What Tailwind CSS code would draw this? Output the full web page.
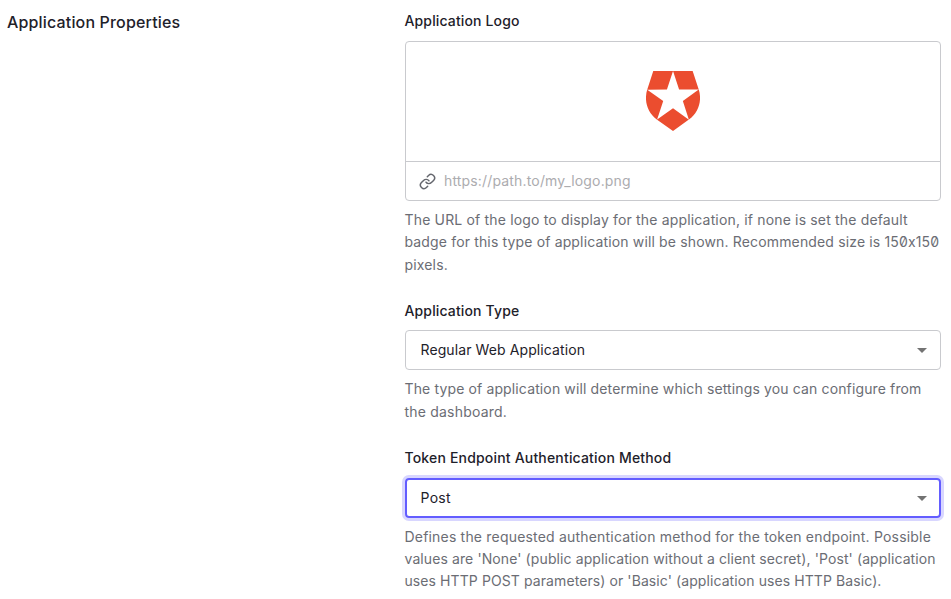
<!DOCTYPE html>
<html lang="en">
<head>
<meta charset="utf-8">
<title>Application Properties</title>
<script src="https://cdn.jsdelivr.net/npm/@tailwindcss/browser@4"></script>
</head>
<body class="h-[599px] overflow-hidden bg-white font-['Inter',sans-serif] text-[#1e212a] [font-feature-settings:'zero']">
<main class="flex">
  <h2 class="w-[405px] shrink-0 pl-[7px] pt-[10px] text-[16px] leading-6 font-medium tracking-[0.16px]">Application Properties</h2>
  <form class="w-[536px] shrink-0 text-[14px]">
    <section class="h-[301px] pt-[11px]">
      <label class="-ml-[0.5px] block h-[30px] leading-5 font-medium tracking-[0.14px]">Application Logo</label>
      <div class="h-40 rounded-[4px] border border-[#c9cace]">
        <div class="flex h-[119px] items-start justify-center pt-[29px]">
          <svg class="h-[60px] w-[54px]" viewBox="1.53 0 20.94 24" preserveAspectRatio="none" fill="#eb4d2f"><path d="M21.98 7.448L19.62 0H4.347L2.02 7.448c-1.352 4.312.03 9.206 3.815 12.015L12.007 24l6.157-4.552c3.755-2.81 5.182-7.688 3.815-12.015l-6.16 4.58 2.343 7.45-6.157-4.597-6.158 4.58 2.358-7.433-6.188-4.55 7.63-.045L12.008 0l2.356 7.404 7.615.044z"/></svg>
        </div>
        <div class="flex h-[39px] items-center border-t border-[#c9cace] pl-[13px]">
          <svg class="mr-2 size-[17px]" viewBox="0 0 24 24" fill="none" stroke="#65676e" stroke-width="2.1" stroke-linecap="round" stroke-linejoin="round"><path d="M10 13a5 5 0 0 0 7.54.54l3-3a5 5 0 0 0-7.07-7.07l-1.72 1.71"/><path d="M14 11a5 5 0 0 0-7.54-.54l-3 3a5 5 0 0 0 7.07 7.07l1.71-1.71"/></svg>
          <span class="leading-5 tracking-[0.16px] text-[#acacaf]">https://path.to/my_logo.png</span>
        </div>
      </div>
      <p class="mt-2 -ml-[0.5px] whitespace-nowrap leading-[22.4px] tracking-[0.165px] text-[#6b6d74]">The URL of the logo to display for the application, if none is set the default<br><span class="tracking-[0.15px]">badge for this type of application will be shown. Recommended size is 150x150</span><br>pixels.</p>
    </section>
    <section class="h-[147px]">
      <label class="-ml-[0.5px] block h-[29px] leading-5 font-medium tracking-[0.14px]">Application Type</label>
      <div class="flex h-10 items-center justify-between rounded-[4px] border border-[#c9cace] pr-[13px] pl-[14.5px]">
        <span class="leading-5 tracking-[0.1px]">Regular Web Application</span>
        <svg class="h-[5px] w-[10px]" viewBox="0 0 10 5" fill="#737373"><path d="M0 0h10L5 5z"/></svg>
      </div>
      <p class="mt-[8.2px] -ml-[0.5px] whitespace-nowrap leading-[22.6px] tracking-[0.133px] text-[#6b6d74]">The type of application will determine which settings you can configure from<br><span class="tracking-[0.2px]">the dashboard.</span></p>
    </section>
    <section>
      <label class="-ml-[0.5px] block h-[30px] leading-5 font-medium tracking-[0.18px]">Token Endpoint Authentication Method</label>
      <div class="flex h-10 items-center justify-between rounded-[4px] border-2 border-[#635dff] pr-3 pl-[13.5px] shadow-[0_0_0_3px_#d8d6ff]">
        <span class="leading-5 tracking-[0.3px]">Post</span>
        <svg class="h-[5px] w-[10px]" viewBox="0 0 10 5" fill="#737373"><path d="M0 0h10L5 5z"/></svg>
      </div>
      <p class="mt-2 -ml-[0.5px] whitespace-nowrap leading-[22.2px] tracking-[0.19px] text-[#6b6d74]">Defines the requested authentication method for the token endpoint. Possible<br><span class="tracking-[0.1px]">values are 'None' (public application without a client secret), 'Post' (application</span><br><span class="tracking-[0.09px]">uses HTTP POST parameters) or 'Basic' (application uses HTTP Basic).</span></p>
    </section>
  </form>
</main>
</body>
</html>
